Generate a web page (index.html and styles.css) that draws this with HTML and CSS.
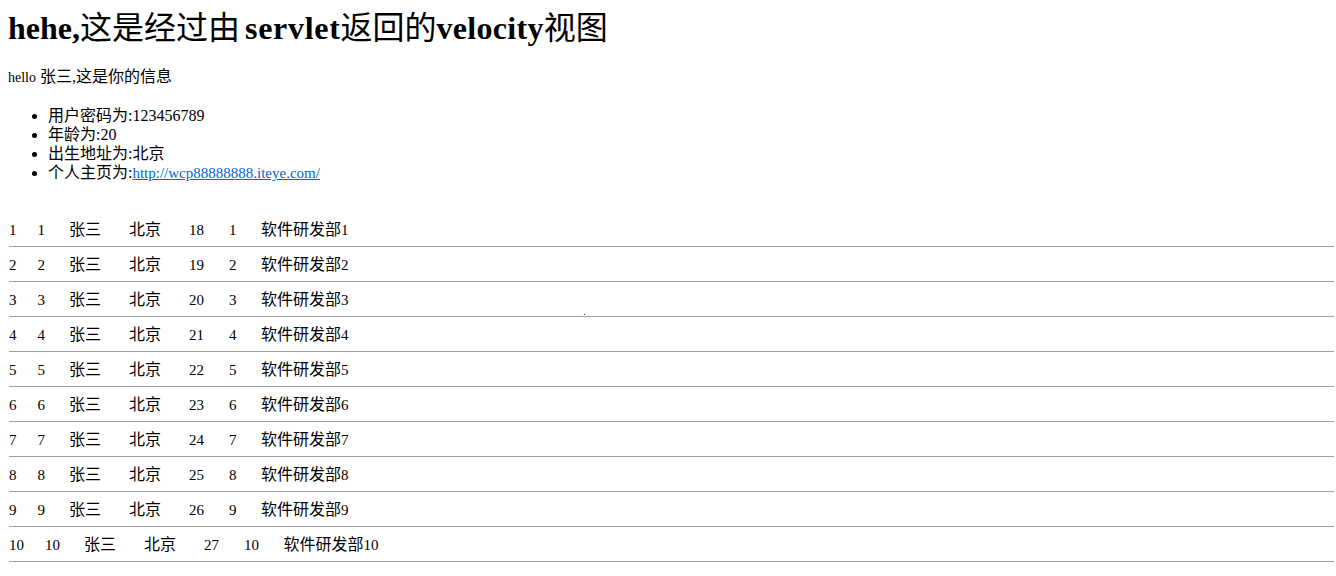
FILE: index.html
```html
<!DOCTYPE html>
<html>
<head>
<meta charset="utf-8">
<title>velocity</title>
<link rel="stylesheet" href="styles.css">
</head>
<body>
<h1 class="title">hehe,<span class="cjk">这是经过由</span><span class="w1">servlet</span><span class="cjk">返回的</span><span class="w2">velocity</span><span class="cjk">视图</span></h1>
<p class="hello"><span class="small">hello</span> 张三,这是你的信息</p>
<ul class="info">
  <li>用户密码为:123456789</li>
  <li>年龄为:20</li>
  <li>出生地址为:北京</li>
  <li>个人主页为:<a class="link" href="#">http://wcp88888888.iteye.com/</a></li>
</ul>
<div class="rows">
  <div class="row"><span class="c c1">1</span><span class="c c2">1</span><span class="c c3">张三</span><span class="c c4">北京</span><span class="c c5">18</span><span class="c c6">1</span><span class="c c7">软件研发部<span class="num">1</span></span></div>
  <div class="row"><span class="c c1">2</span><span class="c c2">2</span><span class="c c3">张三</span><span class="c c4">北京</span><span class="c c5">19</span><span class="c c6">2</span><span class="c c7">软件研发部<span class="num">2</span></span></div>
  <div class="row"><span class="c c1">3</span><span class="c c2">3</span><span class="c c3">张三</span><span class="c c4">北京</span><span class="c c5">20</span><span class="c c6">3</span><span class="c c7">软件研发部<span class="num">3</span></span><span class="dot"></span></div>
  <div class="row"><span class="c c1">4</span><span class="c c2">4</span><span class="c c3">张三</span><span class="c c4">北京</span><span class="c c5">21</span><span class="c c6">4</span><span class="c c7">软件研发部<span class="num">4</span></span></div>
  <div class="row"><span class="c c1">5</span><span class="c c2">5</span><span class="c c3">张三</span><span class="c c4">北京</span><span class="c c5">22</span><span class="c c6">5</span><span class="c c7">软件研发部<span class="num">5</span></span></div>
  <div class="row"><span class="c c1">6</span><span class="c c2">6</span><span class="c c3">张三</span><span class="c c4">北京</span><span class="c c5">23</span><span class="c c6">6</span><span class="c c7">软件研发部<span class="num">6</span></span></div>
  <div class="row"><span class="c c1">7</span><span class="c c2">7</span><span class="c c3">张三</span><span class="c c4">北京</span><span class="c c5">24</span><span class="c c6">7</span><span class="c c7">软件研发部<span class="num">7</span></span></div>
  <div class="row"><span class="c c1">8</span><span class="c c2">8</span><span class="c c3">张三</span><span class="c c4">北京</span><span class="c c5">25</span><span class="c c6">8</span><span class="c c7">软件研发部<span class="num">8</span></span></div>
  <div class="row"><span class="c c1">9</span><span class="c c2">9</span><span class="c c3">张三</span><span class="c c4">北京</span><span class="c c5">26</span><span class="c c6">9</span><span class="c c7">软件研发部<span class="num">9</span></span></div>
  <div class="row"><span class="c c1">10</span><span class="c c2">10</span><span class="c c3">张三</span><span class="c c4">北京</span><span class="c c5">27</span><span class="c c6">10</span><span class="c c7">软件研发部<span class="num">10</span></span></div>
</div>
</body>
</html>
```
FILE: styles.css
```css
html, body {
  margin: 0;
  padding: 0;
  background: #ffffff;
}
body {
  padding: 10px 8px 0 8px;
  font-family: "Liberation Serif", "Noto Sans CJK SC", serif;
  color: #000000;
  font-size: 16px;
}
.title {
  margin: 0;
  font-size: 32px;
  line-height: 37px;
  font-weight: bold;
  white-space: nowrap;
}
.title .cjk {
  font-weight: normal;
}
.title .w1 {
  margin-left: 5px;
  letter-spacing: 0.7px;
}
.title .w2 {
  letter-spacing: 0.3px;
}
.hello {
  margin: 20px 0 0 0;
  line-height: 19px;
  font-size: 16px;
}
.hello .small {
  font-size: 14px;
}
.info {
  margin: 19px 0 0 0;
  padding-left: 40px;
  line-height: 19px;
}
.link {
  color: #0066cc;
  text-decoration: underline;
  font-size: 15px;
}
.rows {
  margin-top: 29px;
  margin-right: -6px;
  margin-left: 1px;
  position: relative;
}
.row {
  display: flex;
  align-items: center;
  box-sizing: border-box;
  height: 35px;
  padding-top: 1px;
  border-bottom: 1px solid #a0a0a0;
  position: relative;
  white-space: nowrap;
}
.c {
  font-size: 15px;
  line-height: 20px;
}
.c3, .c4, .c7 {
  font-size: 16px;
}
.c7 .num {
  font-size: 15px;
}
.c1 { margin-right: 21px; }
.c2 { margin-right: 24px; }
.c3 { margin-right: 28px; }
.c4 { margin-right: 28px; }
.c5 { margin-right: 25px; }
.c6 { margin-right: 24.5px; }
.dot {
  position: absolute;
  left: 575px;
  top: 32px;
  width: 1px;
  height: 1px;
  background: #2020ff;
}
```
